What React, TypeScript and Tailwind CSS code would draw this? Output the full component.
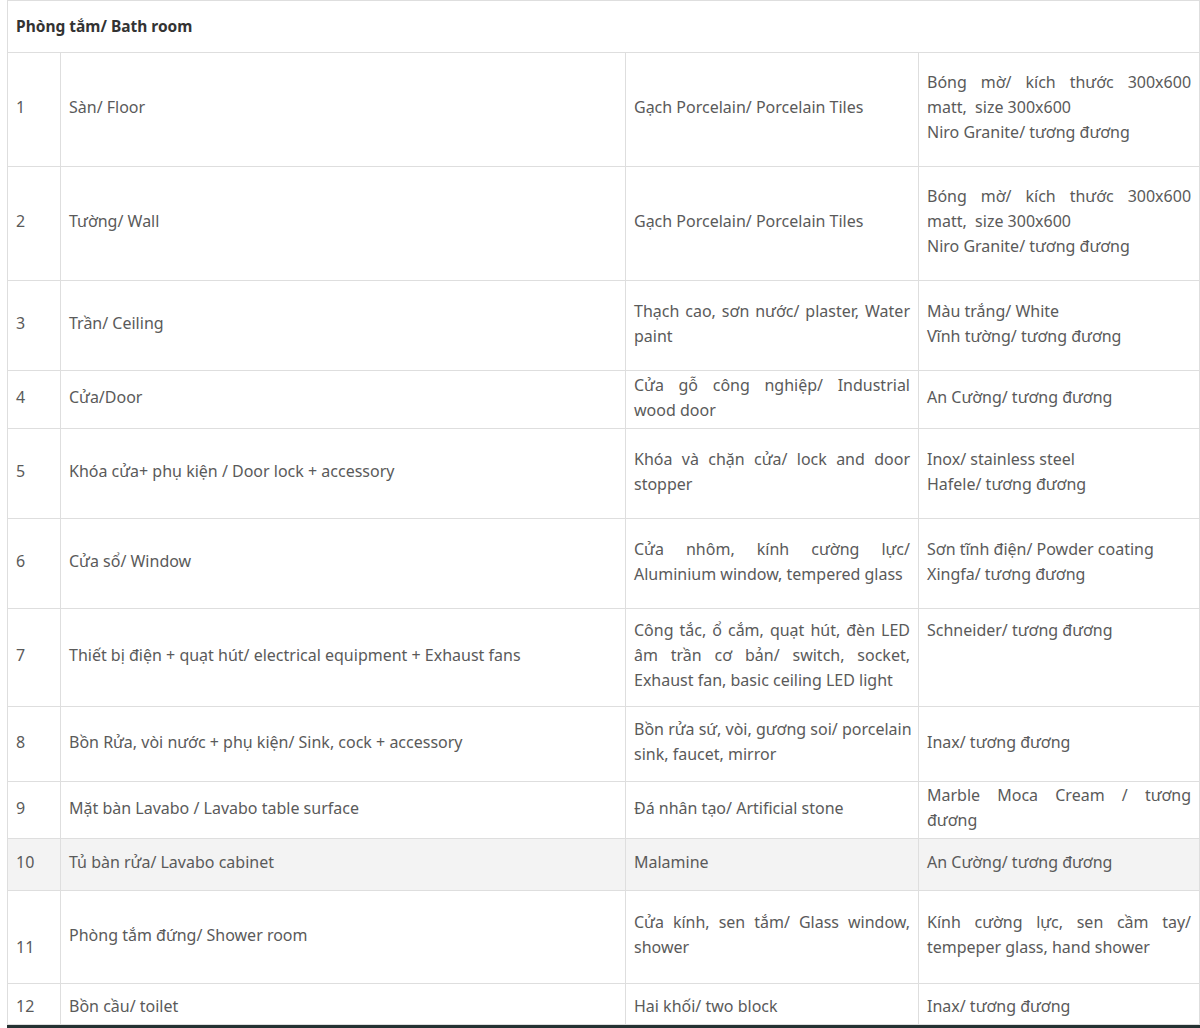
type Line = { t: string; j?: boolean };

interface Row {
  no: string;
  name: string;
  mat: Line[][];
  brand: Line[][];
  h: number;
  gray?: boolean;
}

const rows: Row[] = [
  {
    no: "1",
    name: "Sàn/ Floor",
    mat: [[{ t: "Gạch Porcelain/ Porcelain Tiles" }]],
    brand: [
      [{ t: "Bóng mờ/ kích thước 300x600", j: true }, { t: "matt,  size 300x600" }],
      [{ t: "Niro Granite/ tương đương" }],
    ],
    h: 114,
  },
  {
    no: "2",
    name: "Tường/ Wall",
    mat: [[{ t: "Gạch Porcelain/ Porcelain Tiles" }]],
    brand: [
      [{ t: "Bóng mờ/ kích thước 300x600", j: true }, { t: "matt,  size 300x600" }],
      [{ t: "Niro Granite/ tương đương" }],
    ],
    h: 114,
  },
  {
    no: "3",
    name: "Trần/ Ceiling",
    mat: [[{ t: "Thạch cao, sơn nước/ plaster, Water", j: true }, { t: "paint" }]],
    brand: [[{ t: "Màu trắng/ White" }], [{ t: "Vĩnh tường/ tương đương" }]],
    h: 90,
  },
  {
    no: "4",
    name: "Cửa/Door",
    mat: [[{ t: "Cửa gỗ công nghiệp/ Industrial", j: true }, { t: "wood door" }]],
    brand: [[{ t: "An Cường/ tương đương" }]],
    h: 58,
  },
  {
    no: "5",
    name: "Khóa cửa+ phụ kiện / Door lock + accessory",
    mat: [[{ t: "Khóa và chặn cửa/ lock and door", j: true }, { t: "stopper" }]],
    brand: [[{ t: "Inox/ stainless steel" }], [{ t: "Hafele/ tương đương" }]],
    h: 90,
  },
  {
    no: "6",
    name: "Cửa sổ/ Window",
    mat: [[{ t: "Cửa nhôm, kính cường lực/", j: true }, { t: "Aluminium window, tempered glass" }]],
    brand: [[{ t: "Sơn tĩnh điện/ Powder coating" }], [{ t: "Xingfa/ tương đương" }]],
    h: 90,
  },
  {
    no: "7",
    name: "Thiết bị điện + quạt hút/ electrical equipment + Exhaust fans",
    mat: [
      [
        { t: "Công tắc, ổ cắm, quạt hút, đèn LED", j: true },
        { t: "âm trần cơ bản/ switch, socket,", j: true },
        { t: "Exhaust fan, basic ceiling LED light" },
      ],
    ],
    brand: [[{ t: "Schneider/ tương đương" }], [{ t: "\u00a0" }], [{ t: "\u00a0" }]],
    h: 98,
  },
  {
    no: "8",
    name: "Bồn Rửa, vòi nước + phụ kiện/ Sink,  cock + accessory",
    mat: [[{ t: "Bồn rửa sứ, vòi, gương soi/ porcelain", j: true }, { t: "sink, faucet, mirror" }]],
    brand: [[{ t: "Inax/ tương đương" }]],
    h: 75,
  },
  {
    no: "9",
    name: "Mặt bàn Lavabo / Lavabo table surface",
    mat: [[{ t: "Đá nhân tạo/ Artificial stone" }]],
    brand: [[{ t: "Marble Moca Cream / tương", j: true }, { t: "đương" }]],
    h: 57,
  },
  {
    no: "10",
    name: "Tủ bàn rửa/ Lavabo cabinet",
    mat: [[{ t: "Malamine" }]],
    brand: [[{ t: "An Cường/ tương đương" }]],
    h: 52,
    gray: true,
  },
  {
    no: "11",
    name: "Phòng tắm đứng/ Shower room",
    mat: [[{ t: "Cửa kính, sen tắm/ Glass window,", j: true }, { t: "shower" }]],
    brand: [[{ t: "Kính cường lực, sen cầm tay/", j: true }, { t: "tempeper glass, hand shower" }]],
    h: 93,
  },
  {
    no: "12",
    name: "Bồn cầu/ toilet",
    mat: [[{ t: "Hai khối/ two block" }]],
    brand: [[{ t: "Inax/ tương đương" }]],
    h: 41,
  },
];

function Paras({ paras }: { paras: Line[][] }) {
  return (
    <div>
      {paras.map((p, i) => (
        <div key={i}>
          {p.map((l, k) => (
            <div
              key={k}
              className={
                l.j
                  ? "whitespace-nowrap text-justify [text-align-last:justify]"
                  : "whitespace-pre"
              }
            >
              {l.t}
            </div>
          ))}
        </div>
      ))}
    </div>
  );
}

export default function App() {
  return (
    <div className="min-h-[1028px] bg-white pl-[7px] font-['Noto_Sans',sans-serif] text-[16px] leading-[25px] text-[#5a5a5a]">
      <table className="w-[1192px] table-fixed border-collapse border border-[#dedede]">
        <colgroup>
          <col className="w-[53px]" />
          <col className="w-[565px]" />
          <col className="w-[293px]" />
          <col className="w-[281px]" />
        </colgroup>
        <tbody>
          <tr className="h-[52px]">
            <td colSpan={4} className="border border-[#dedede] px-2 align-middle text-[15.5px] font-bold text-[#333]">
              Phòng tắm/ Bath room
            </td>
          </tr>
          {rows.map((r) => {
            const cell = r.no === "12" ? "border border-[#dedede] px-2 pt-1 align-middle" : "border border-[#dedede] px-2 pb-1 align-middle";
            return (
              <tr key={r.no} style={{ height: r.h }} className={r.gray ? "bg-[#f3f3f3]" : "bg-white"}>
                <td className={cell}>
                  <div className={r.no === "11" ? "pt-6" : ""}>{r.no}</div>
                </td>
                <td className={cell}>{r.name}</td>
                <td className={cell}>
                  <Paras paras={r.mat} />
                </td>
                <td className={cell}>
                  <Paras paras={r.brand} />
                </td>
              </tr>
            );
          })}
        </tbody>
      </table>
      <div className="h-1 bg-[#243232]" />
    </div>
  );
}
